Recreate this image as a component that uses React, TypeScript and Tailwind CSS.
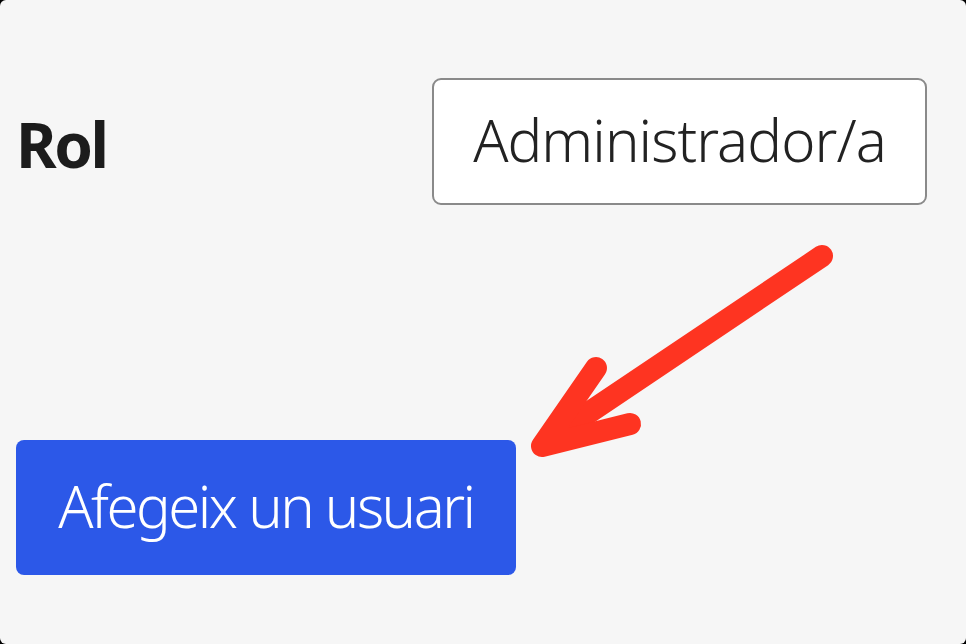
const App = () => {
  return (
    <div className="h-[644px] w-[966px] bg-black">
      <div
        className="relative h-full w-full overflow-hidden rounded-[6px] bg-[#f6f6f6] px-[16px] pt-[78px]"
        style={{ fontFamily: '"Noto Sans", "Open Sans", sans-serif' }}
      >
        <div className="flex items-center justify-between pr-[23px]">
          <span className="pt-[4px] text-[62px] font-bold leading-none tracking-[-2.5px] text-[#1c1c1c]">Rol</span>
          <div className="flex h-[127px] w-[495px] items-center justify-center rounded-[9px] border-2 border-[#8a8a8a] bg-white pb-[4px] text-[58px] font-light tracking-[-0.9px] text-[#222]">
            Administrador/a
          </div>
        </div>

        <button className="mt-[235px] flex h-[135px] w-[500px] items-center justify-center rounded-[8px] bg-[#2c58e8] pb-[4px] text-[58px] font-light tracking-[-2.5px] text-white">
          Afegeix un usuari
        </button>

        <svg className="absolute left-0 top-0" width="966" height="644" viewBox="0 0 966 644">
          <g stroke="#fe3421" strokeWidth="22" strokeLinecap="round" strokeLinejoin="round" fill="none">
            <line x1="822" y1="256" x2="560" y2="432" />
            <polyline points="596,368 542,446 630,424" />
          </g>
        </svg>
      </div>
    </div>
  );
};

export default App;
